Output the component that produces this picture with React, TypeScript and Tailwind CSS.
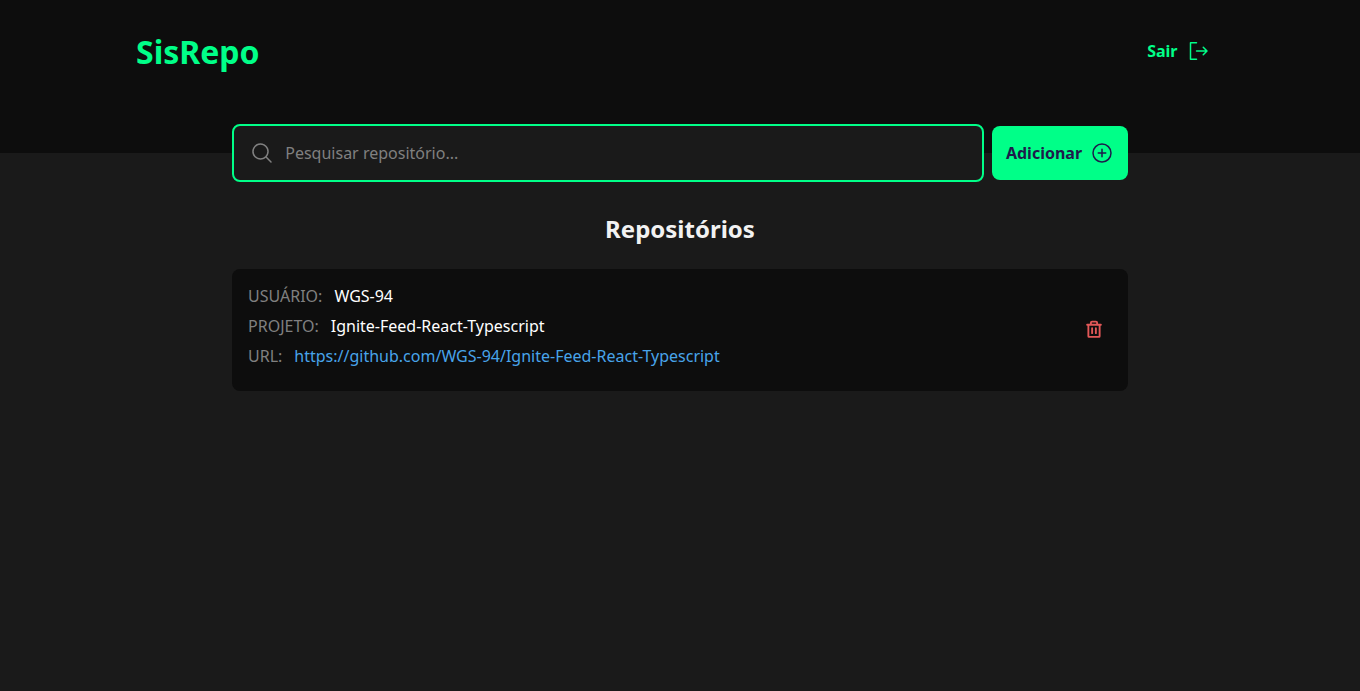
import { PiMagnifyingGlass, PiPlusCircle, PiSignOut, PiTrashBold } from "react-icons/pi";

const repositories = [
  {
    user: "WGS-94",
    project: "Ignite-Feed-React-Typescript",
    url: "https://github.com/WGS-94/Ignite-Feed-React-Typescript",
  },
];

function Header() {
  return (
    <header className="flex h-[153px] items-start justify-between bg-[#0d0d0d] pr-[150.5px] pl-[136px] text-[#00ff88]">
      <h1 className="mt-[28px] text-[32px] leading-[48px] font-bold">SisRepo</h1>
      <button className="mt-[39px] flex items-center gap-2 leading-6 font-bold">
        Sair
        <PiSignOut size={24} />
      </button>
    </header>
  );
}

function SearchForm() {
  return (
    <form className="-mt-[29px] flex h-[58px] items-center gap-2">
      <label className="flex h-[58px] flex-1 items-center gap-[11.25px] rounded-lg border-2 border-[#00ff88] bg-[#1a1a1a] px-4 text-[#808080]">
        <PiMagnifyingGlass size={24} />
        <input
          placeholder="Pesquisar repositório..."
          className="flex-1 bg-transparent outline-none placeholder:text-[#808080]"
        />
      </label>
      <button
        type="button"
        className="flex h-[54px] w-[136px] items-center justify-center gap-2 rounded-lg bg-[#00ff88] font-bold text-[#1e1b4b]"
      >
        Adicionar
        <PiPlusCircle size={24} />
      </button>
    </form>
  );
}

export default function App() {
  return (
    <div className="min-h-screen bg-[#1a1a1a] font-['Noto_Sans',sans-serif] text-base">
      <Header />
      <main className="mx-auto w-[896px]">
        <SearchForm />
        <h2 className="mt-[29px] text-center text-2xl leading-9 font-bold text-[#f2f2f2]">Repositórios</h2>
        {repositories.map((repo) => (
          <article
            key={repo.url}
            className="mt-[22px] flex h-[122px] items-start justify-between rounded-lg bg-[#0d0d0d] pt-[15px] pr-6 pl-4"
          >
            <dl className="flex flex-col gap-1.5 leading-6 text-[#808080]">
              <div className="flex gap-3">
                <dt>USUÁRIO:</dt>
                <dd className="text-white">{repo.user}</dd>
              </div>
              <div className="flex gap-3">
                <dt>PROJETO:</dt>
                <dd className="text-white">{repo.project}</dd>
              </div>
              <div className="flex gap-3">
                <dt>URL:</dt>
                <dd>
                  <a href={repo.url} className="text-[#48a4ea]">{repo.url}</a>
                </dd>
              </div>
            </dl>
            <button aria-label="Remover" className="mt-[36px] text-[#e25858]">
              <PiTrashBold size={20} />
            </button>
          </article>
        ))}
      </main>
    </div>
  );
}
